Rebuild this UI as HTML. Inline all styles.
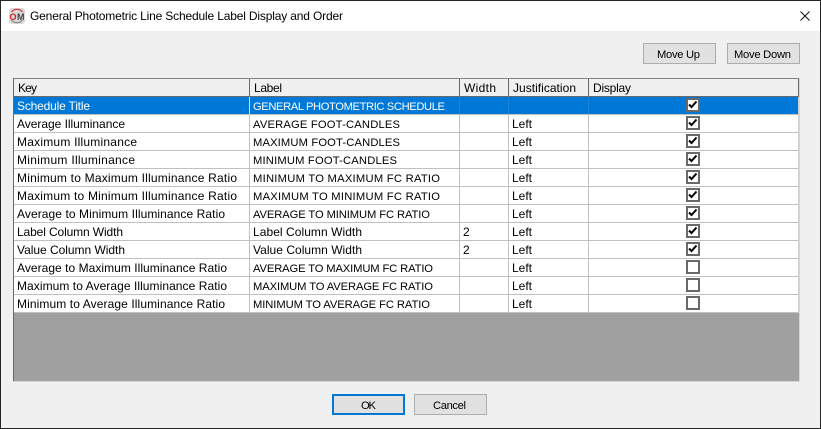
<!DOCTYPE html>
<html><head><meta charset="utf-8"><style>
html,body{margin:0;padding:0;width:821px;height:429px;overflow:hidden;background:#f0f0f0}
svg{display:block}
text{font-family:"Liberation Sans",sans-serif;font-size:12px;fill:#000}
.s{fill:#fff}
.u{font-size:11.2px}
.b{font-size:11.2px}
rect,line{shape-rendering:crispEdges}
</style></head><body>
<svg width="821" height="429" viewBox="0 0 821 429" xmlns="http://www.w3.org/2000/svg">
<rect x="0" y="0" width="821" height="429" fill="#262626"/>
<rect x="1" y="1" width="819" height="427" fill="#f0f0f0"/>
<rect x="1" y="1" width="819" height="30" fill="#fff"/>
<!-- logo -->
<rect x="9" y="8" width="16" height="16" rx="3" fill="#d9d9d9"/>
<path d="M11.5 12A7 7 0 0 1 22.5 12" fill="none" stroke="#d8302a" stroke-width="1.2"/>
<path d="M11.5 20A7 7 0 0 0 22.5 20" fill="none" stroke="#8a8a8a" stroke-width="1.2"/>
<text x="9.5" y="20" style="font-size:9px;font-weight:bold;fill:#d01f1f" textLength="7.5">O</text>
<text x="17" y="20" style="font-size:9px;font-weight:bold;fill:#444" textLength="8">M</text>
<text x="30" y="20" textLength="313">General Photometric Line Schedule Label Display and Order</text>
<path d="M800.5 11.5L809.5 20.5M809.5 11.5L800.5 20.5" stroke="#111" stroke-width="1" fill="none"/>
<!-- top buttons -->
<rect x="643.5" y="43.5" width="72" height="20" fill="#e1e1e1" stroke="#adadad"/>
<text class="b" x="657" y="58" textLength="43">Move Up</text>
<rect x="727.5" y="43.5" width="72" height="20" fill="#e1e1e1" stroke="#adadad"/>
<text class="b" x="734" y="58" textLength="57">Move Down</text>
<!-- table frame -->
<rect x="13" y="78" width="787" height="304" fill="#fbfbfb"/>
<rect x="13" y="78" width="787" height="304" fill="#f8f8f8"/>
<rect x="13" y="78" width="786" height="303" fill="#d6d6d6"/>
<rect x="13" y="78" width="786" height="303" fill="#d6d6d6"/>
<rect x="13" y="78" width="786" height="1" fill="#808080"/>
<rect x="13" y="78" width="1" height="303" fill="#696969"/>
<rect x="14" y="79" width="785" height="302" fill="#a0a0a0"/>
<rect x="799" y="78" width="1" height="304" fill="#d6d6d6"/>
<rect x="13" y="381" width="787" height="1" fill="#d6d6d6"/>
<!-- header -->
<rect x="14" y="79" width="784" height="17" fill="#f0f0f0"/>
<rect x="14" y="96" width="785" height="1" fill="#696969"/>
<rect x="798" y="79" width="1" height="18" fill="#696969"/>
<rect x="249" y="79" width="1" height="17" fill="#696969"/>
<rect x="459" y="79" width="1" height="17" fill="#696969"/>
<rect x="508" y="79" width="1" height="17" fill="#696969"/>
<rect x="588" y="79" width="1" height="17" fill="#696969"/>
<text x="18" y="92" textLength="19">Key</text>
<text x="254" y="92" textLength="28">Label</text>
<text x="464" y="92" textLength="32">Width</text>
<text x="513" y="92" textLength="63">Justification</text>
<text x="593" y="92" textLength="38">Display</text>
<!-- body -->
<rect x="14" y="97" width="784" height="216" fill="#c0c0c0"/>
<rect x="798" y="97" width="1" height="216" fill="#d0d0d0"/>
<rect x="14" y="97" width="784" height="17" fill="#0078d7"/>
<g fill="#fff">
<rect x="14" y="115" width="235" height="17"/><rect x="250" y="115" width="209" height="17"/><rect x="460" y="115" width="48" height="17"/><rect x="509" y="115" width="79" height="17"/><rect x="589" y="115" width="209" height="17"/>
<rect x="14" y="133" width="235" height="17"/><rect x="250" y="133" width="209" height="17"/><rect x="460" y="133" width="48" height="17"/><rect x="509" y="133" width="79" height="17"/><rect x="589" y="133" width="209" height="17"/>
<rect x="14" y="151" width="235" height="17"/><rect x="250" y="151" width="209" height="17"/><rect x="460" y="151" width="48" height="17"/><rect x="509" y="151" width="79" height="17"/><rect x="589" y="151" width="209" height="17"/>
<rect x="14" y="169" width="235" height="17"/><rect x="250" y="169" width="209" height="17"/><rect x="460" y="169" width="48" height="17"/><rect x="509" y="169" width="79" height="17"/><rect x="589" y="169" width="209" height="17"/>
<rect x="14" y="187" width="235" height="17"/><rect x="250" y="187" width="209" height="17"/><rect x="460" y="187" width="48" height="17"/><rect x="509" y="187" width="79" height="17"/><rect x="589" y="187" width="209" height="17"/>
<rect x="14" y="205" width="235" height="17"/><rect x="250" y="205" width="209" height="17"/><rect x="460" y="205" width="48" height="17"/><rect x="509" y="205" width="79" height="17"/><rect x="589" y="205" width="209" height="17"/>
<rect x="14" y="223" width="235" height="17"/><rect x="250" y="223" width="209" height="17"/><rect x="460" y="223" width="48" height="17"/><rect x="509" y="223" width="79" height="17"/><rect x="589" y="223" width="209" height="17"/>
<rect x="14" y="241" width="235" height="17"/><rect x="250" y="241" width="209" height="17"/><rect x="460" y="241" width="48" height="17"/><rect x="509" y="241" width="79" height="17"/><rect x="589" y="241" width="209" height="17"/>
<rect x="14" y="259" width="235" height="17"/><rect x="250" y="259" width="209" height="17"/><rect x="460" y="259" width="48" height="17"/><rect x="509" y="259" width="79" height="17"/><rect x="589" y="259" width="209" height="17"/>
<rect x="14" y="277" width="235" height="17"/><rect x="250" y="277" width="209" height="17"/><rect x="460" y="277" width="48" height="17"/><rect x="509" y="277" width="79" height="17"/><rect x="589" y="277" width="209" height="17"/>
<rect x="14" y="295" width="235" height="17"/><rect x="250" y="295" width="209" height="17"/><rect x="460" y="295" width="48" height="17"/><rect x="509" y="295" width="79" height="17"/><rect x="589" y="295" width="209" height="17"/>
</g>
<!-- selected row column separators -->
<rect x="249" y="97" width="1" height="17" fill="#cfe4f7"/>
<rect x="459" y="97" width="1" height="17" fill="#1a86db"/>
<rect x="508" y="97" width="1" height="17" fill="#1a86db"/>
<rect x="588" y="97" width="1" height="17" fill="#1a86db"/>
<text class="s" x="17" y="110" textLength="73">Schedule Title</text>
<text class="s u" x="253" y="110" textLength="192">GENERAL PHOTOMETRIC SCHEDULE</text>
<!-- keys -->
<text x="17" y="128" textLength="108">Average Illuminance</text>
<text x="17" y="146" textLength="120">Maximum Illuminance</text>
<text x="17" y="164" textLength="118">Minimum Illuminance</text>
<text x="17" y="182" textLength="220">Minimum to Maximum Illuminance Ratio</text>
<text x="17" y="200" textLength="220">Maximum to Minimum Illuminance Ratio</text>
<text x="17" y="218" textLength="208">Average to Minimum Illuminance Ratio</text>
<text x="17" y="236" textLength="106">Label Column Width</text>
<text x="17" y="254" textLength="108">Value Column Width</text>
<text x="17" y="272" textLength="210">Average to Maximum Illuminance Ratio</text>
<text x="17" y="290" textLength="210">Maximum to Average Illuminance Ratio</text>
<text x="17" y="308" textLength="208">Minimum to Average Illuminance Ratio</text>
<!-- labels -->
<text class="u" x="253" y="128" textLength="147">AVERAGE FOOT-CANDLES</text>
<text class="u" x="253" y="146" textLength="147">MAXIMUM FOOT-CANDLES</text>
<text class="u" x="253" y="164" textLength="144">MINIMUM FOOT-CANDLES</text>
<text class="u" x="253" y="182" textLength="187">MINIMUM TO MAXIMUM FC RATIO</text>
<text class="u" x="253" y="200" textLength="187">MAXIMUM TO MINIMUM FC RATIO</text>
<text class="u" x="253" y="218" textLength="177">AVERAGE TO MINIMUM FC RATIO</text>
<text x="253" y="236" textLength="109">Label Column Width</text>
<text x="253" y="254" textLength="109">Value Column Width</text>
<text class="u" x="253" y="272" textLength="180">AVERAGE TO MAXIMUM FC RATIO</text>
<text class="u" x="253" y="290" textLength="180">MAXIMUM TO AVERAGE FC RATIO</text>
<text class="u" x="253" y="308" textLength="177">MINIMUM TO AVERAGE FC RATIO</text>
<!-- width -->
<text x="463" y="236">2</text>
<text x="463" y="254">2</text>
<!-- justification -->
<text x="512" y="128" textLength="20">Left</text>
<text x="512" y="146" textLength="20">Left</text>
<text x="512" y="164" textLength="20">Left</text>
<text x="512" y="182" textLength="20">Left</text>
<text x="512" y="200" textLength="20">Left</text>
<text x="512" y="218" textLength="20">Left</text>
<text x="512" y="236" textLength="20">Left</text>
<text x="512" y="254" textLength="20">Left</text>
<text x="512" y="272" textLength="20">Left</text>
<text x="512" y="290" textLength="20">Left</text>
<text x="512" y="308" textLength="20">Left</text>
<!-- checkboxes -->
<g fill="#fff" stroke="#696969" stroke-width="2">
<rect x="687" y="99" width="12" height="12"/>
<rect x="687" y="117" width="12" height="12"/>
<rect x="687" y="135" width="12" height="12"/>
<rect x="687" y="153" width="12" height="12"/>
<rect x="687" y="171" width="12" height="12"/>
<rect x="687" y="189" width="12" height="12"/>
<rect x="687" y="207" width="12" height="12"/>
<rect x="687" y="225" width="12" height="12"/>
<rect x="687" y="243" width="12" height="12"/>
<rect x="687" y="261" width="12" height="12"/>
<rect x="687" y="279" width="12" height="12"/>
<rect x="687" y="297" width="12" height="12"/>
</g>
<g fill="none" stroke="#000" stroke-width="2">
<path d="M689 104.5l2.5 2.5 5-5.5"/>
<path d="M689 122.5l2.5 2.5 5-5.5"/>
<path d="M689 140.5l2.5 2.5 5-5.5"/>
<path d="M689 158.5l2.5 2.5 5-5.5"/>
<path d="M689 176.5l2.5 2.5 5-5.5"/>
<path d="M689 194.5l2.5 2.5 5-5.5"/>
<path d="M689 212.5l2.5 2.5 5-5.5"/>
<path d="M689 230.5l2.5 2.5 5-5.5"/>
<path d="M689 248.5l2.5 2.5 5-5.5"/>
</g>
<!-- bottom buttons -->
<rect x="333" y="395" width="71" height="19" fill="#e1e1e1" stroke="#0078d7" stroke-width="2"/>
<text class="b" x="361" y="409" textLength="15">OK</text>
<rect x="414.5" y="394.5" width="72" height="20" fill="#e1e1e1" stroke="#adadad"/>
<text class="b" x="433" y="409" textLength="33">Cancel</text>
</svg>
</body></html>
